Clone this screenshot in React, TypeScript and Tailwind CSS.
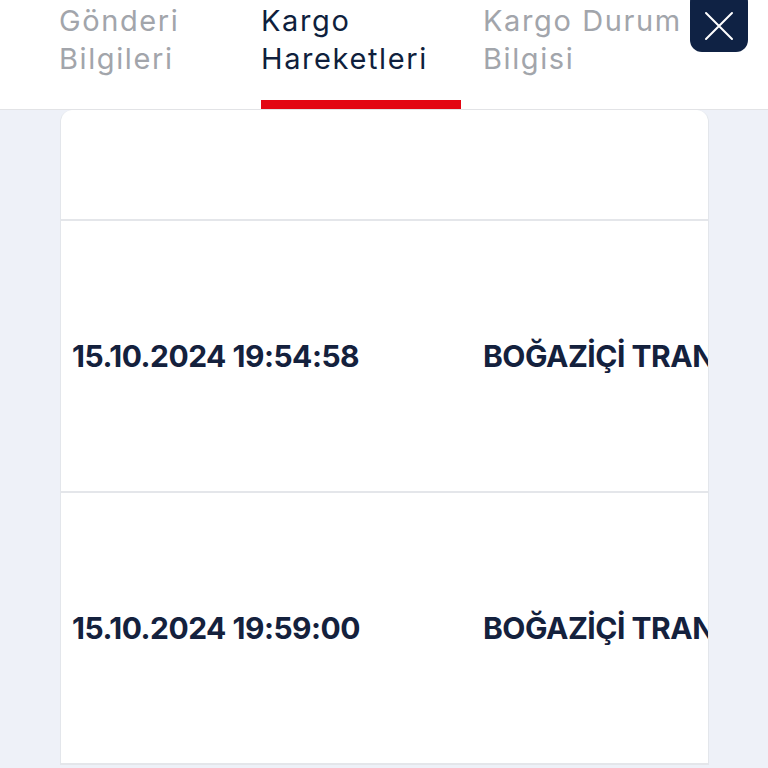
const rows = [
  { date: "15.10.2024 19:54:58", place: "BOĞAZİÇİ TRANSFER MERKEZİ" },
  { date: "15.10.2024 19:59:00", place: "BOĞAZİÇİ TRANSFER MERKEZİ" },
];

export default function App() {
  return (
    <div
      className="h-[768px] w-[768px] overflow-hidden bg-[#eef1f8]"
      style={{ fontFamily: "Inter, 'Noto Sans', sans-serif" }}
    >
      <header className="relative flex h-[110px] border-b border-[#e2e3e6] bg-white pl-[59px] text-[29px] leading-[38px] tracking-[1.6px]">
        <div className="w-[202px] shrink-0 pt-[2px] text-[#a2a5ab]">
          Gönderi
          <br />
          Bilgileri
        </div>
        <div className="relative w-[222px] shrink-0 pt-[2px] text-[#0f1f3d]">
          Kargo
          <br />
          Hareketleri
          <span className="absolute bottom-0 left-0 h-[9px] w-[200px] bg-[#e30613]" />
        </div>
        <div className="shrink-0 whitespace-nowrap pt-[2px] text-[#a2a5ab]">
          Kargo Durum
          <br />
          Bilgisi
        </div>
        <button className="absolute right-[20px] top-[-10px] flex h-[62px] w-[58px] items-center justify-center rounded-xl bg-[#0f2244] pt-[10px]">
          <svg width="30" height="30" viewBox="0 0 30 30" fill="none" stroke="white" strokeWidth="2" strokeLinecap="round">
            <path d="M2 2 L28 28 M28 2 L2 28" />
          </svg>
        </button>
      </header>

      <div className="ml-[60px] w-[649px] overflow-hidden rounded-t-xl border-x-[1.5px] border-[#e3e6eb] bg-white">
        <div className="h-[111px] border-b-2 border-[#e4e6ea]" />
        {rows.map((r) => (
          <div
            key={r.date}
            className="flex h-[272px] items-center whitespace-nowrap border-b-2 border-[#e4e6ea] pl-[11px] text-[30px] font-bold tracking-[-0.5px] text-[#14213d]"
          >
            <span className="w-[411px] shrink-0">{r.date}</span>
            <span className="shrink-0">{r.place}</span>
          </div>
        ))}
      </div>
    </div>
  );
}
